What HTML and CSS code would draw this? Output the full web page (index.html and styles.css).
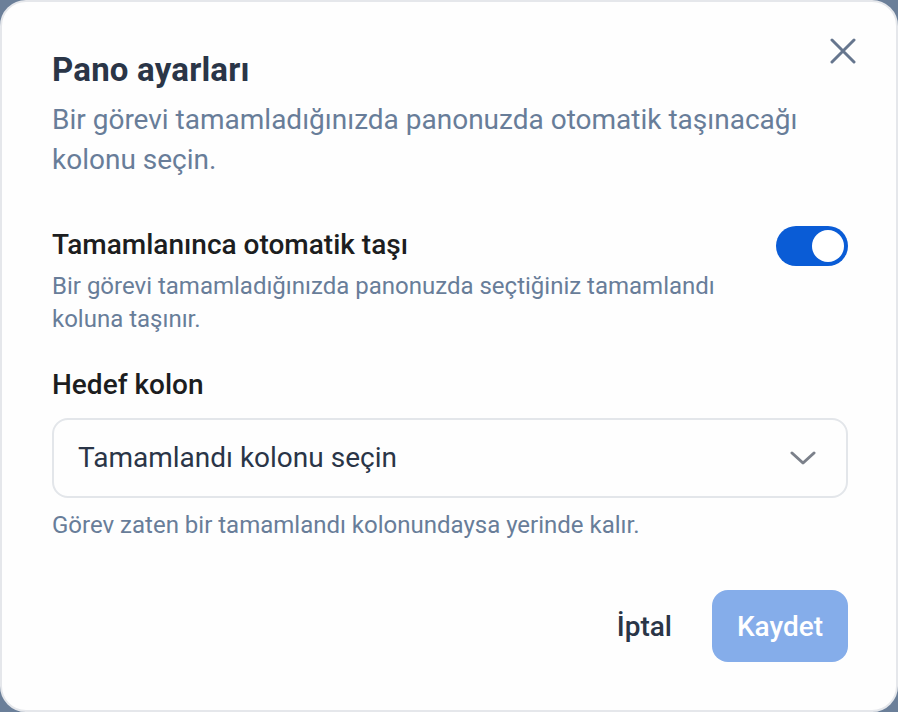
FILE: index.html
```html
<!DOCTYPE html>
<html lang="tr">
<head>
<meta charset="utf-8">
<link rel="stylesheet" href="styles.css">
</head>
<body>
<div class="dialog">
  <button class="close" aria-label="Kapat">
    <svg width="26" height="26" viewBox="0 0 26 26"><path d="M2 2 L24 24 M24 2 L2 24" stroke="currentColor" stroke-width="3" stroke-linecap="round" fill="none"/></svg>
  </button>
  <h1 class="title">Pano ayarları</h1>
  <p class="subtitle">Bir görevi tamamladığınızda panonuzda otomatik taşınacağı kolonu seçin.</p>

  <div class="setting">
    <div class="setting-text">
      <div class="label">Tamamlanınca otomatik taşı</div>
      <div class="desc">Bir görevi tamamladığınızda panonuzda seçtiğiniz tamamlandı koluna taşınır.</div>
    </div>
    <div class="toggle"><span class="knob"></span></div>
  </div>

  <div class="label target">Hedef kolon</div>
  <div class="select">
    <span>Tamamlandı kolonu seçin</span>
    <svg width="26" height="16" viewBox="0 0 26 16"><path d="M2 3 L13 13 L24 3" stroke="currentColor" stroke-width="3" stroke-linecap="round" stroke-linejoin="round" fill="none"/></svg>
  </div>
  <div class="hint">Görev zaten bir tamamlandı kolonundaysa yerinde kalır.</div>

  <div class="actions">
    <button class="cancel">İptal</button>
    <button class="save">Kaydet</button>
  </div>
</div>
</body>
</html>
```
FILE: styles.css
```css
* { box-sizing: border-box; }
html, body { margin: 0; padding: 0; }
body {
  background: #6b7f99;
  font-family: Roboto, "Liberation Sans", sans-serif;
  width: 898px;
  height: 712px;
}
.dialog {
  position: relative;
  width: 898px;
  height: 712px;
  background: #fefefe;
  border: 2px solid #e5e7eb;
  border-radius: 26px;
  padding: 50px 48px 0 50px;
}
.close {
  position: absolute;
  top: 36px;
  right: 40px;
  background: none;
  border: 0;
  padding: 0;
  color: #66768e;
  display: flex;
}
.title {
  margin: 0;
  font-size: 33px;
  line-height: 36px;
  font-weight: 680;
  letter-spacing: 0.2px;
  color: #2a3547;
}
.subtitle {
  margin: 12px 0 0;
  font-size: 28px;
  line-height: 40px;
  color: #687d99;
  max-width: 790px;
}
.setting {
  margin-top: 48px;
  display: flex;
  justify-content: space-between;
  align-items: flex-start;
}
.label {
  font-size: 28px;
  line-height: 34px;
  font-weight: 500;
  color: #1c1d20;
}
.desc {
  margin-top: 8px;
  font-size: 24px;
  line-height: 33px;
  color: #687d99;
  max-width: 700px;
}
.toggle {
  width: 72px;
  height: 40px;
  border-radius: 20px;
  background: #0a5cd6;
  padding: 4px;
  display: flex;
  justify-content: flex-end;
  margin-top: -2px;
}
.knob {
  width: 32px;
  height: 32px;
  border-radius: 50%;
  background: #fff;
}
.target { margin-top: 32px; }
.select {
  margin-top: 16px;
  height: 80px;
  border: 2px solid #e3e6ea;
  border-radius: 16px;
  display: flex;
  align-items: center;
  justify-content: space-between;
  padding: 0 30px 0 24px;
  font-size: 28px;
  line-height: 34px;
  color: #2a3547;
}
.select svg { color: #7b808a; }
.hint {
  margin-top: 12px;
  font-size: 24px;
  line-height: 30px;
  color: #687d99;
}
.actions {
  margin-top: 50px;
  display: flex;
  justify-content: flex-end;
  align-items: center;
  gap: 40px;
}
.cancel {
  background: none;
  border: 0;
  padding: 0;
  font-family: inherit;
  font-size: 28px;
  font-weight: 500;
  color: #2a3547;
}
.save {
  width: 136px;
  height: 72px;
  border: 0;
  border-radius: 16px;
  background: #85adea;
  color: #fff;
  font-family: inherit;
  font-size: 28px;
  font-weight: 500;
}
```
